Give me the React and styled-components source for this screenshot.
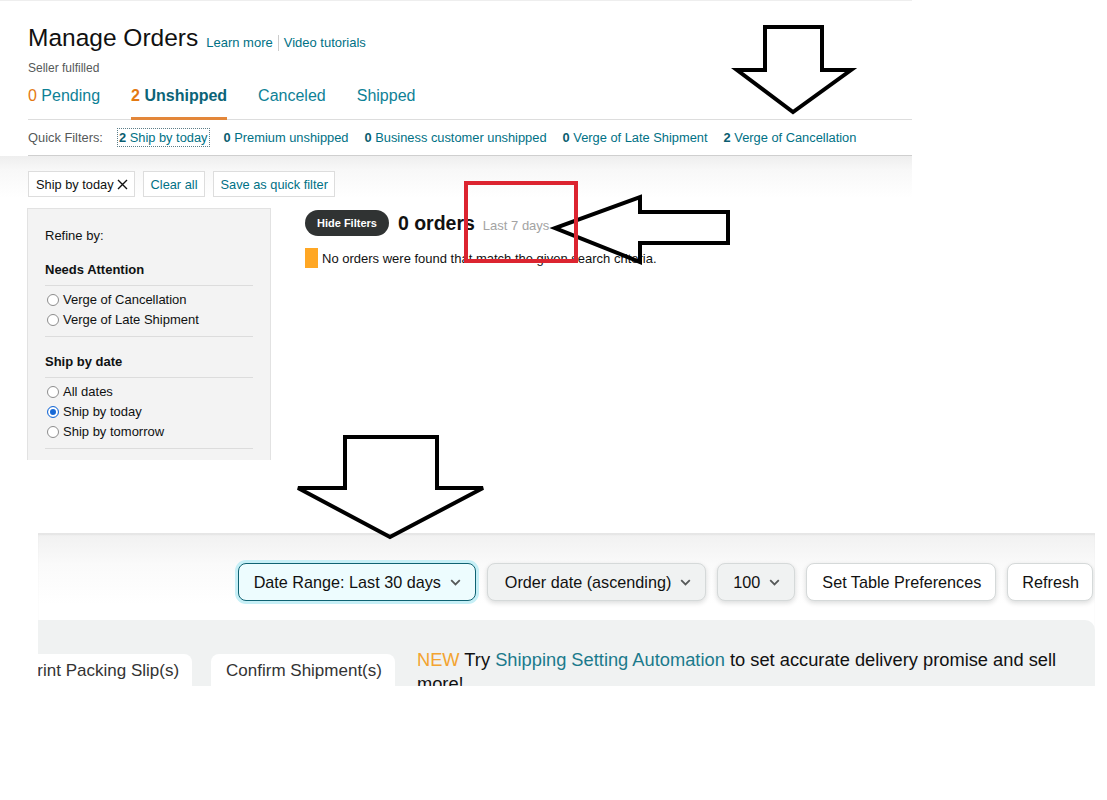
import styled, { createGlobalStyle } from 'styled-components';

const teal = '#007185';
const orange = '#e47911';
const darkText = '#0f1111';
const greyText = '#565959';

const GlobalStyle = createGlobalStyle`
  html, body {
    margin: 0;
    background: #fff;
  }
  body {
    font-family: "Liberation Sans", Arial, sans-serif;
    color: ${darkText};
  }
`;

const tabs = [
  { count: '0', label: 'Pending' },
  { count: '2', label: 'Unshipped', active: true },
  { label: 'Canceled' },
  { label: 'Shipped' },
];

const quickFilters = [
  { count: '2', label: 'Ship by today', focused: true },
  { count: '0', label: 'Premium unshipped' },
  { count: '0', label: 'Business customer unshipped' },
  { count: '0', label: 'Verge of Late Shipment' },
  { count: '2', label: 'Verge of Cancellation' },
];

const refineGroups = [
  {
    title: 'Needs Attention',
    options: [{ label: 'Verge of Cancellation' }, { label: 'Verge of Late Shipment' }],
  },
  {
    title: 'Ship by date',
    options: [
      { label: 'All dates' },
      { label: 'Ship by today', checked: true },
      { label: 'Ship by tomorrow' },
    ],
  },
];

const Chevron = () => (
  <svg width="11" height="7" viewBox="0 0 11 7">
    <path d="M1.2 1.2 L5.5 5.4 L9.8 1.2" fill="none" stroke="#565959" strokeWidth="1.8" />
  </svg>
);

const App = () => {
  return (
    <Canvas>
      <GlobalStyle />
      <TopShot>
        <HeaderRow>
          <PageTitle>Manage Orders</PageTitle>
          <HelpLinks>
            <HelpLink>Learn more</HelpLink>
            <HelpLink divided>Video tutorials</HelpLink>
          </HelpLinks>
        </HeaderRow>
        <SubTitle>Seller fulfilled</SubTitle>
        <TabBar>
          {tabs.map((tab) => (
            <Tab key={tab.label} active={tab.active}>
              {tab.count && <TabCount>{tab.count} </TabCount>}
              {tab.label}
            </Tab>
          ))}
        </TabBar>
        <QuickFilterRow>
          <QuickLabel>Quick Filters:</QuickLabel>
          {quickFilters.map((f) => (
            <QuickFilter key={f.label} focused={f.focused}>
              <b>{f.count}</b> {f.label}
            </QuickFilter>
          ))}
        </QuickFilterRow>
        <Shade>
          <ChipRow>
            <Chip>
              Ship by today
              <svg width="11" height="11" viewBox="0 0 11 11">
                <path d="M1 1 L10 10 M10 1 L1 10" stroke="#111" strokeWidth="1.4" />
              </svg>
            </Chip>
            <Chip link>Clear all</Chip>
            <Chip link>Save as quick filter</Chip>
          </ChipRow>
          <Body>
            <RefinePanel>
              <RefineTitle>Refine by:</RefineTitle>
              {refineGroups.map((group) => (
                <RefineGroup key={group.title}>
                  <GroupTitle>{group.title}</GroupTitle>
                  <OptionList>
                    {group.options.map((opt) => (
                      <Option key={opt.label}>
                        <Radio checked={opt.checked} />
                        {opt.label}
                      </Option>
                    ))}
                  </OptionList>
                </RefineGroup>
              ))}
            </RefinePanel>
            <Results>
              <ResultHeader>
                <HideButton>Hide Filters</HideButton>
                <OrderCount>0 orders</OrderCount>
                <Period>Last 7 days</Period>
              </ResultHeader>
              <Notice>
                <NoticeMark />
                No orders were found that match the given search criteria.
              </Notice>
            </Results>
          </Body>
        </Shade>
      </TopShot>

      <BottomShot>
        <Toolbar>
          <ToolButton variant="focus">
            Date Range: Last 30 days <Chevron />
          </ToolButton>
          <ToolButton variant="grey" wide>
            Order date (ascending) <Chevron />
          </ToolButton>
          <ToolButton variant="grey">
            100 <Chevron />
          </ToolButton>
          <ToolButton>Set Table Preferences</ToolButton>
          <ToolButton narrow>Refresh</ToolButton>
        </Toolbar>
        <ActionPanel>
          <ActionButtons>
            <ActionButton>Print Packing Slip(s)</ActionButton>
            <ActionButton>Confirm Shipment(s)</ActionButton>
          </ActionButtons>
          <Promo>
            <NewTag>NEW</NewTag> Try <PromoLink>Shipping Setting Automation</PromoLink> to set
            accurate delivery promise and sell more!
          </Promo>
        </ActionPanel>
      </BottomShot>

      <Annotations width="1107" height="800" viewBox="0 0 1107 800">
        <polygon points="765,27 822,27 822,70 851,70 793,112 737,70 765,70" />
        <polygon points="728,212 728,243 640,243 640,262 555,228 640,197 640,212" />
        <polygon points="345,437 437,437 437,488 483,488 390,537 298,488 345,488" />
        <rect className="mark" x="466" y="183" width="110" height="78" />
      </Annotations>
    </Canvas>
  );
};

const Canvas = styled.div`
  position: relative;
  width: 1107px;
  height: 800px;
  overflow: hidden;
  background: #fff;
`;

const TopShot = styled.div`
  width: 912px;
  height: 460px;
  overflow: hidden;
  box-sizing: border-box;
  padding-top: 22px;
  border-top: 1px solid #eee;
`;

const HeaderRow = styled.div`
  display: flex;
  align-items: baseline;
  padding-left: 28px;
`;

const PageTitle = styled.h1`
  margin: 0;
  font-size: 24.5px;
  line-height: 30px;
  font-weight: 400;
  color: #111;
`;

const HelpLinks = styled.div`
  display: flex;
  margin-left: 8px;
  position: relative;
  top: 1px;
`;

const HelpLink = styled.span`
  font-size: 13px;
  line-height: 16px;
  color: ${teal};
  padding: ${(p) => (p.divided ? '0 0 0 5px' : '0 5px 0 0')};
  border-left: ${(p) => (p.divided ? '1px solid #ccc' : 'none')};
`;

const SubTitle = styled.div`
  padding-left: 28px;
  margin-top: 7px;
  font-size: 12px;
  line-height: 16px;
  color: ${greyText};
`;

const TabBar = styled.div`
  display: flex;
  gap: 31px;
  margin: 2px 0 0 28px;
  border-bottom: 1px solid #ddd;
`;

const Tab = styled.div`
  font-size: 16px;
  line-height: 20px;
  padding: 8px 0 11px;
  margin-bottom: -1px;
  color: ${(p) => (p.active ? '#0b6478' : '#0e8196')};
  font-weight: ${(p) => (p.active ? 700 : 400)};
  border-bottom: 3px solid ${(p) => (p.active ? '#e3873a' : 'transparent')};
`;

const TabCount = styled.span`
  color: ${orange};
`;

const QuickFilterRow = styled.div`
  display: flex;
  align-items: center;
  gap: 16px;
  height: 35px;
  margin-left: 28px;
  border-bottom: 1px solid #cfcfcf;
  font-size: 12.85px;
`;

const QuickLabel = styled.span`
  color: ${greyText};
`;

const QuickFilter = styled.span`
  color: ${teal};
  outline: ${(p) => (p.focused ? '1px dotted #5b7d87' : 'none')};
  outline-offset: 1px;
  b {
    color: #0b5d70;
  }
`;

const Shade = styled.div`
  padding-top: 15px;
  background: linear-gradient(to bottom, #eeeeee 0px, #f8f8f8 14px, #ffffff 42px);
`;

const ChipRow = styled.div`
  display: flex;
  gap: 8px;
  padding-left: 28px;
`;

const Chip = styled.span`
  display: inline-flex;
  align-items: center;
  gap: 3px;
  height: 26px;
  padding: 0 6px 0 7px;
  box-sizing: border-box;
  border: 1px solid #ddd;
  background: #fff;
  font-size: 12.8px;
  color: ${(p) => (p.link ? teal : darkText)};
`;

const Body = styled.div`
  display: flex;
  gap: 34px;
  margin-top: 11px;
  padding-left: 27px;
`;

const RefinePanel = styled.div`
  width: 244px;
  height: 280px;
  box-sizing: border-box;
  padding: 17px 17px 0;
  background: #f3f3f3;
  border: 1px solid #e2e2e2;
  font-size: 13px;
`;

const RefineTitle = styled.div`
  line-height: 20px;
`;

const RefineGroup = styled.div`
  margin-top: 14px;
  & + & {
    margin-top: 15px;
  }
`;

const GroupTitle = styled.div`
  font-weight: 700;
  line-height: 20px;
  padding-bottom: 5px;
  border-bottom: 1px solid #dcdcdc;
`;

const OptionList = styled.div`
  padding: 4px 0 6px;
  border-bottom: 1px solid #dcdcdc;
`;

const Option = styled.div`
  display: flex;
  align-items: center;
  gap: 4px;
  line-height: 20px;
  padding-left: 2px;
`;

const Radio = styled.span`
  width: 12px;
  height: 12px;
  box-sizing: border-box;
  border-radius: 50%;
  background: #fff;
  border: 1px solid ${(p) => (p.checked ? '#1769d6' : '#8d8d8d')};
  box-shadow: ${(p) => (p.checked ? 'inset 0 0 0 2px #fff, inset 0 0 0 6px #1769d6' : 'none')};
`;

const Results = styled.div`
  padding-top: 2px;
`;

const ResultHeader = styled.div`
  display: flex;
  align-items: center;
`;

const HideButton = styled.span`
  height: 26px;
  line-height: 26px;
  padding: 0 12px;
  border-radius: 13px;
  background: #303333;
  color: #fff;
  font-size: 11px;
  font-weight: 700;
`;

const OrderCount = styled.span`
  margin-left: 9px;
  font-size: 19.5px;
  font-weight: 700;
  color: #111;
`;

const Period = styled.span`
  margin: 4px 0 0 8px;
  font-size: 13px;
  color: #a3a3a3;
`;

const Notice = styled.div`
  display: flex;
  align-items: center;
  gap: 4px;
  margin-top: 12px;
  font-size: 13px;
  color: #111;
`;

const NoticeMark = styled.span`
  width: 13px;
  height: 20px;
  background: #ffa724;
`;

const BottomShot = styled.div`
  width: 1057px;
  height: 152px;
  margin: 73px 0 0 38px;
  overflow: hidden;
  border-top: 1px solid #e6e6e6;
  box-shadow: inset 0 1px 2px rgba(0, 0, 0, 0.06);
  background: linear-gradient(to bottom, #f1f1f1 0px, #fafafa 30px, #ffffff 70px);
`;

const Toolbar = styled.div`
  display: flex;
  justify-content: flex-end;
  gap: 11px;
  padding: 29px 2px 0 0;
`;

const toolColors = {
  focus: { bg: '#edfcfe', border: '#0f6272', ring: '0 0 0 3px #c6eff6' },
  grey: { bg: '#f0f2f2', border: '#d5d9d9', ring: '0 2px 5px rgba(15,17,17,0.15)' },
  plain: { bg: '#ffffff', border: '#d5d9d9', ring: '0 2px 5px rgba(15,17,17,0.15)' },
};

const toolPadding = (p) => {
  if (p.wide) return '0 14px 0 17px';
  if (p.narrow) return '0 13px 0 14px';
  return '0 14px 0 15px';
};

const ToolButton = styled.span`
  display: inline-flex;
  align-items: center;
  gap: 9px;
  height: 38px;
  box-sizing: border-box;
  padding: ${toolPadding};
  border-radius: 8px;
  font-size: 16.2px;
  color: #111;
  background: ${(p) => toolColors[p.variant || 'plain'].bg};
  border: 1px solid ${(p) => toolColors[p.variant || 'plain'].border};
  box-shadow: ${(p) => toolColors[p.variant || 'plain'].ring};
`;

const ActionPanel = styled.div`
  display: flex;
  align-items: flex-start;
  margin-top: 19px;
  height: 120px;
  padding-top: 28px;
  box-sizing: border-box;
  background: #f0f2f2;
  border-radius: 0 10px 0 0;
`;

const ActionButtons = styled.div`
  display: flex;
  gap: 19px;
  margin: 6px 0 0 -27px;
`;

const ActionButton = styled.span`
  height: 44px;
  box-sizing: border-box;
  padding: 6px 13px 0 15px;
  line-height: 22px;
  font-size: 17px;
  color: #333;
  background: #fff;
  border-radius: 8px;
  white-space: nowrap;
`;

const Promo = styled.div`
  width: 655px;
  margin-left: 22px;
  font-size: 18.3px;
  line-height: 24px;
  color: #111;
`;

const NewTag = styled.span`
  color: #f3a431;
`;

const PromoLink = styled.span`
  color: #1b7a8c;
`;

const Annotations = styled.svg`
  position: absolute;
  left: 0;
  top: 0;
  pointer-events: none;
  polygon {
    fill: none;
    stroke: #000;
    stroke-width: 4;
    stroke-linejoin: miter;
  }
  .mark {
    fill: none;
    stroke: #dc2430;
    stroke-width: 4;
  }
`;

export default App;
